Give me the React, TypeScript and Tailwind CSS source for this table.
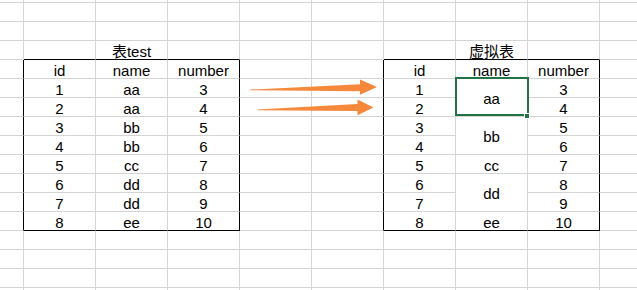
import React from 'react';

// spreadsheet geometry: 10 columns, 17 rows
const COL_COUNT = 10;
const ROW_COUNT = 17;

const leftData = [
  ['1', 'aa', '3'],
  ['2', 'aa', '4'],
  ['3', 'bb', '5'],
  ['4', 'bb', '6'],
  ['5', 'cc', '7'],
  ['6', 'dd', '8'],
  ['7', 'dd', '9'],
  ['8', 'ee', '10']
];

// merged name cells of the virtual table: [first row, span, text]
const mergedNames: [number, number, string][] = [
  [5, 2, 'aa'],
  [7, 2, 'bb'],
  [9, 1, 'cc'],
  [10, 2, 'dd'],
  [12, 1, 'ee']
];

type Cell = {
  key: string;
  text?: string;
  span: number;
  rightBlack: boolean;
  bottomBlack: boolean;
  noRight: boolean;
  noBottom: boolean;
  selected?: boolean;
};

const inTable = (c: number, start: number) => c >= start && c <= start + 2;

const buildCells = () => {
  const cells: Cell[] = [];
  for (let r = 0; r < ROW_COUNT; r++) {
    for (let c = 0; c < COL_COUNT; c++) {
      // skip positions covered by a merged cell above
      if (c === 7 && mergedNames.some(([start, span]) => span === 2 && r === start + 1)) continue;

      let text: string | undefined;
      let span = 1;
      let selected = false;

      if (r === 3 && c === 2) text = '表test';
      if (r === 3 && c === 7) text = '虚拟表';
      if (r === 4 && (inTable(c, 1) || inTable(c, 6))) {
        text = ['id', 'name', 'number'][c < 5 ? c - 1 : c - 6];
      }
      if (r >= 5 && r <= 12) {
        const row = leftData[r - 5];
        if (inTable(c, 1)) text = row[c - 1];
        if (c === 6) text = row[0];
        if (c === 8) text = row[2];
        if (c === 7) {
          const m = mergedNames.find(([start]) => start === r);
          if (m) {
            text = m[2];
            span = m[1];
            selected = r === 5;
          }
        }
      }

      const bodyRow = r >= 4 && r <= 12;
      const rightBlack = bodyRow && (c === 0 || c === 3 || c === 5 || c === 8);
      const bottomBlack = (r === 3 || r === 12) && (inTable(c, 1) || inTable(c, 6));

      cells.push({
        key: `${r}-${c}`,
        text,
        span,
        rightBlack,
        bottomBlack,
        noRight: c === COL_COUNT - 1,
        noBottom: r === ROW_COUNT - 1,
        selected
      });
    }
  }
  return cells;
};

const SheetCell = ({ cell }: { cell: Cell }) => {
  const right = cell.noRight ? 'border-r-0' : cell.rightBlack ? 'border-r border-r-black' : 'border-r border-r-[#d4d4d4]';
  const bottom = cell.noBottom ? 'border-b-0' : cell.bottomBlack ? 'border-b border-b-black' : 'border-b border-b-[#d4d4d4]';
  const merged = cell.span === 2;
  return (
    <div
      className={`relative flex justify-center whitespace-nowrap text-[15px] leading-[15px] text-black ${right} ${bottom} ${
        merged ? 'row-span-2 items-center pt-[2px]' : 'items-end'
      } ${cell.selected ? 'z-10' : ''}`}
    >
      {cell.text && <span>{cell.text}</span>}
      {cell.selected && (
        <>
          <div className="absolute -left-[1px] -top-[2px] h-[39px] w-[74px] border-2 border-[#217346]" />
          <div className="absolute -right-[3px] -bottom-[3px] h-[6px] w-[6px] border border-white bg-[#217346]" />
        </>
      )}
    </div>
  );
};

const Arrows = () => (
  <svg className="pointer-events-none absolute left-0 top-0 z-20" width={637} height={290}>
    <polygon points="250,89.6 360,84.2 360,79.4 377,87 360,94.7 360,91.3 250,90.2" fill="#f5883b" />
    <polygon points="257.5,109.6 357.5,104 357.5,99.4 373.5,107.6 357.5,115.2 357.5,111 257.5,110.2" fill="#f5883b" />
  </svg>
);

const App = () => {
  const cells = buildCells();
  return (
    <div
      className="relative h-[290px] w-[637px] overflow-hidden bg-white"
      style={{ fontFamily: '"Liberation Sans", "Noto Sans CJK SC", Arial, sans-serif' }}
    >
      <div className="grid grid-cols-[24px_repeat(8,72px)_37px] grid-rows-[3px_repeat(15,19px)_2px]">
        {cells.map(cell => (
          <SheetCell key={cell.key} cell={cell} />
        ))}
      </div>
      <Arrows />
    </div>
  );
};

export default App;
